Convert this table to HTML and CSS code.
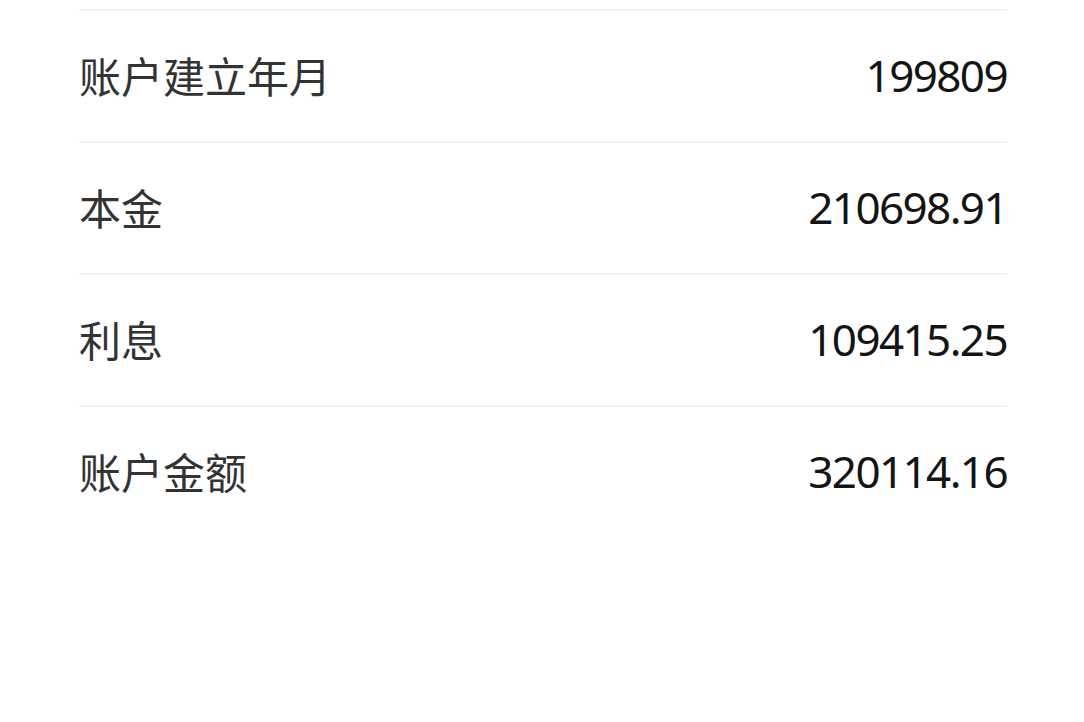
FILE: index.html
```html
<!DOCTYPE html>
<html lang="zh-CN">
<head>
<meta charset="utf-8">
<link rel="stylesheet" href="styles.css">
</head>
<body>
<div class="list">
  <div class="row"><span class="label">账户建立年月</span><span class="value">199809</span></div>
  <div class="row"><span class="label">本金</span><span class="value">210698.91</span></div>
  <div class="row"><span class="label">利息</span><span class="value">109415.25</span></div>
  <div class="row"><span class="label">账户金额</span><span class="value">320114.16</span></div>
</div>
</body>
</html>
```
FILE: styles.css
```css
html, body {
  margin: 0;
  padding: 0;
  background: #ffffff;
}
.list {
  padding: 9px 77px 0 79px;
}
.row {
  display: flex;
  align-items: center;
  justify-content: space-between;
  height: 130px;
  padding-bottom: 3px;
  box-sizing: border-box;
  border-top: 2px solid #f1f1f1;
  height: 132px;
}
.label {
  font-family: "Noto Sans CJK SC", "Noto Sans", sans-serif;
  font-size: 42px;
  color: #333333;
}
.value {
  font-family: "Noto Sans", "Noto Sans CJK SC", sans-serif;
  font-size: 44px;
  letter-spacing: -1.6px;
  color: #141414;
}
```
